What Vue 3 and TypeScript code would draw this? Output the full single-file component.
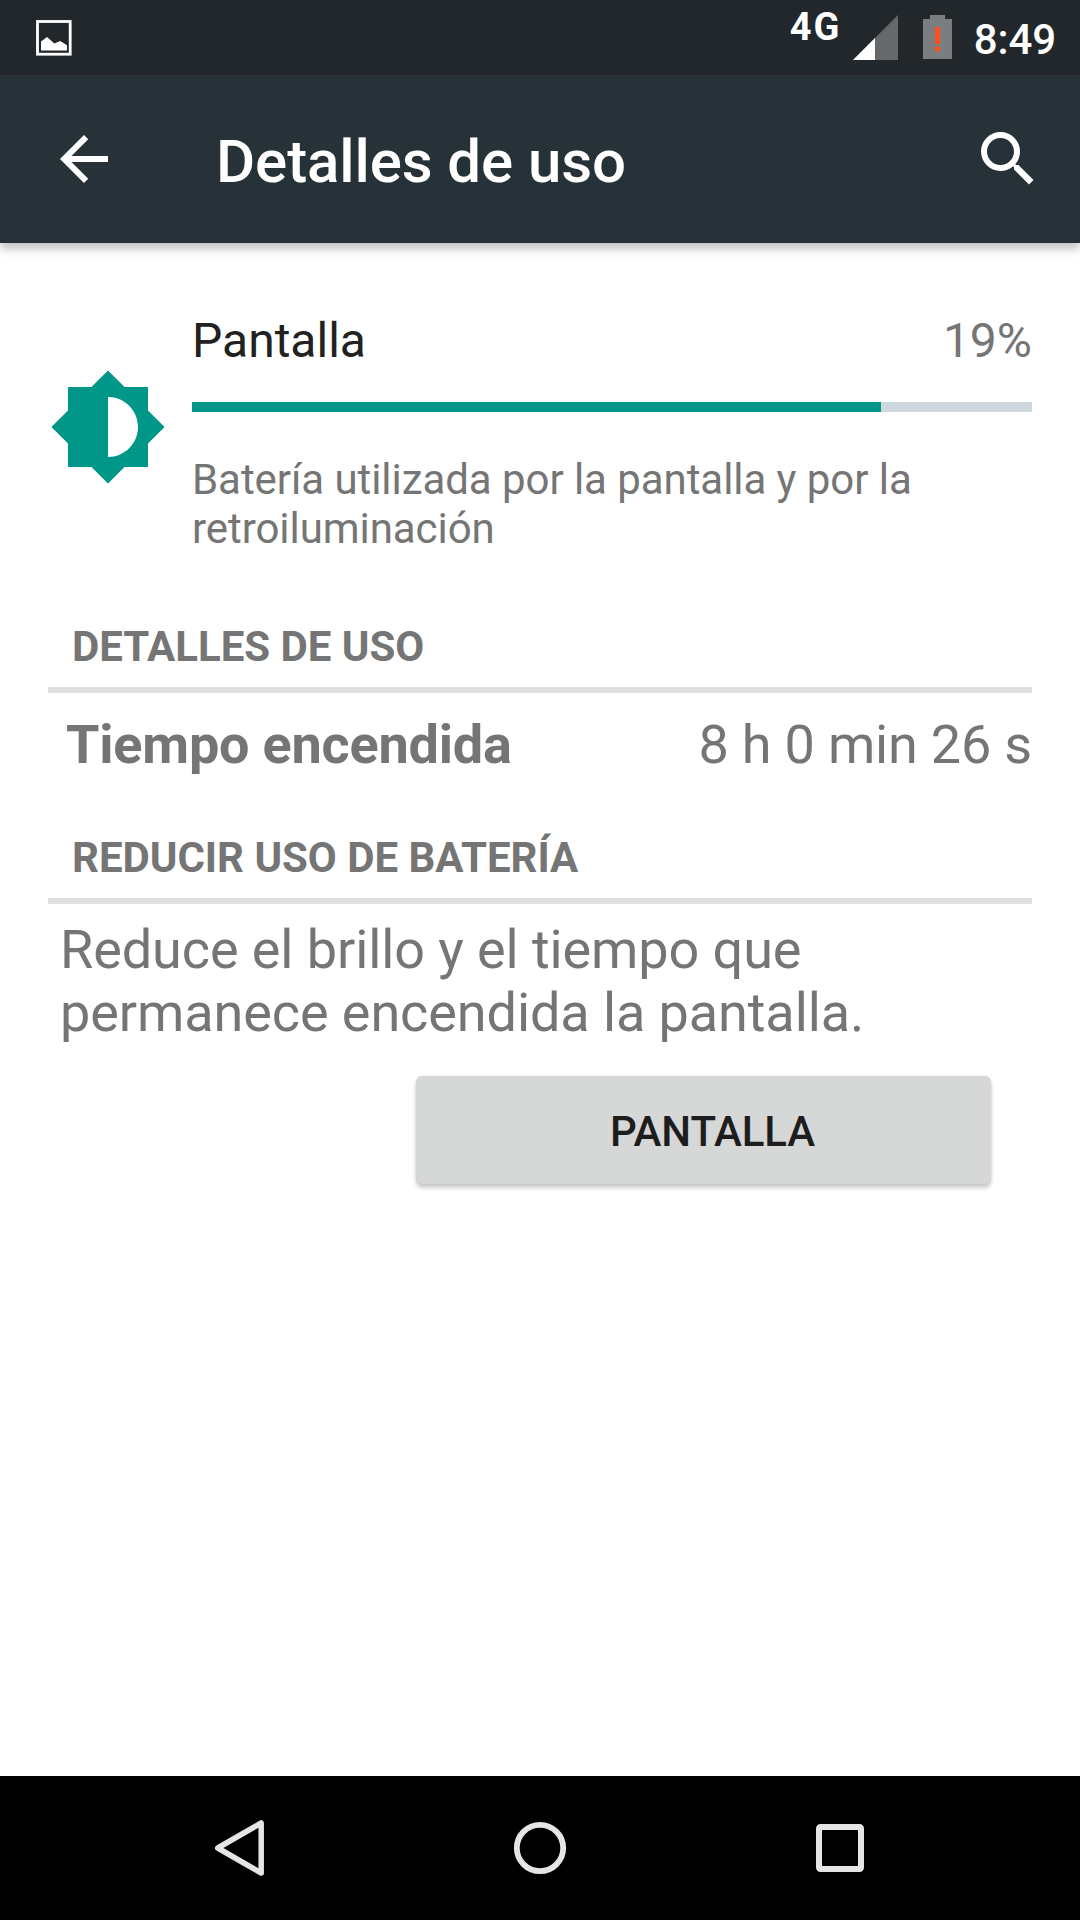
<script setup lang="ts">
import { ref } from 'vue'

interface Usage {
  name: string
  percent: string
  fill: number
  description: string
}

const clock = ref('8:49')
const usage = ref<Usage>({
  name: 'Pantalla',
  percent: '19%',
  fill: 82.02,
  description: 'Batería utilizada por la pantalla y por la retroiluminación',
})
</script>

<template>
  <div class="screen">
    <div class="status-bar">
      <svg class="picture" width="36" height="36" viewBox="0 0 36 36">
        <rect x="1.5" y="1.5" width="32.7" height="32.7" fill="none" stroke="#fff" stroke-width="2.8" />
        <path d="M5 21.5 11 17l7.3 6.6L24.2 21 31 25.2V30.5H5z" fill="#fff" />
      </svg>
      <div class="status-right">
        <span class="network">4G</span>
        <svg class="signal" width="45" height="45" viewBox="0 0 45 45">
          <path d="M0 45 45 0V45z" fill="#66696c" />
          <path d="M0 45 22 23V45z" fill="#fff" />
        </svg>
        <svg class="battery" width="29" height="44" viewBox="0 0 29 44">
          <path d="M7 0H22V4H29V44H0V4H7z" fill="#7a7e80" />
          <path d="M12 12H17V29H12z" fill="#ff5020" />
          <circle cx="14.5" cy="34" r="2.8" fill="#ff5020" />
        </svg>
        <span class="clock">{{ clock }}</span>
      </div>
    </div>

    <header class="app-bar">
      <svg class="back" width="72" height="72" viewBox="0 0 24 24">
        <path fill="#fff" d="M20 11H7.83l5.59-5.59L12 4l-8 8 8 8 1.41-1.41L7.83 13H20v-2z" />
      </svg>
      <h1>Detalles de uso</h1>
      <svg class="search" width="72" height="72" viewBox="0 0 24 24">
        <path
          fill="#fff"
          d="M15.5 14h-.79l-.28-.27A6.471 6.471 0 0 0 16 9.5 6.5 6.5 0 1 0 9.5 16c1.61 0 3.09-.59 4.23-1.57l.27.28v.79l5 4.99L20.49 19l-4.99-5zm-6 0C7.01 14 5 11.99 5 9.5S7.01 5 9.5 5 14 7.01 14 9.5 11.99 14 9.5 14z"
        />
      </svg>
    </header>

    <main>
      <section class="summary">
        <svg class="brightness" width="120" height="120" viewBox="0 0 24 24">
          <path
            fill="#009688"
            d="M20 15.31L23.31 12 20 8.69V4h-4.69L12 .69 8.69 4H4v4.69L.69 12 4 15.31V20h4.69L12 23.31 15.31 20H20v-4.69zM12 18V6c3.31 0 6 2.69 6 6s-2.69 6-6 6z"
          />
        </svg>
        <div class="summary-body">
          <div class="summary-title">
            <span>{{ usage.name }}</span>
            <span class="percent">{{ usage.percent }}</span>
          </div>
          <div class="track"><div class="fill" :style="{ width: usage.fill + '%' }"></div></div>
          <p class="description">{{ usage.description }}</p>
        </div>
      </section>

      <h2>DETALLES DE USO</h2>
      <div class="detail">
        <strong>Tiempo encendida</strong>
        <span>8 h 0 min 26 s</span>
      </div>

      <h2>REDUCIR USO DE BATERÍA</h2>
      <p class="tip">Reduce el brillo y el tiempo que<br />permanece encendida la pantalla.</p>
      <button type="button">PANTALLA</button>
    </main>

    <nav class="nav-bar">
      <svg width="60" height="60" viewBox="0 0 60 60">
        <path d="M51.2 5V55L7.7 30z" fill="none" stroke="#e5e5e5" stroke-width="5.5" stroke-linejoin="round" />
      </svg>
      <svg width="60" height="60" viewBox="0 0 60 60">
        <circle cx="30" cy="30" r="23.2" fill="none" stroke="#e5e5e5" stroke-width="5.8" />
      </svg>
      <svg width="60" height="60" viewBox="0 0 60 60">
        <rect x="9" y="9" width="42" height="42" rx="1.5" fill="none" stroke="#e5e5e5" stroke-width="6" />
      </svg>
    </nav>
  </div>
</template>

<style>
body {
  background: #fff;
}
</style>

<style scoped>
.screen {
  display: flex;
  flex-direction: column;
  width: 1080px;
  height: 1920px;
  overflow: hidden;
  background: #fff;
  color: #757575;
  font-family: Roboto, 'Liberation Sans', sans-serif;
}

h1,
h2,
p {
  margin: 0;
}

svg {
  display: block;
  flex: none;
}

.status-bar {
  display: flex;
  justify-content: space-between;
  height: 75px;
  padding: 0 24px 0 36px;
  box-sizing: border-box;
  background: #22272b;
  color: #fff;
}

.picture {
  margin-top: 20px;
}

.status-right {
  display: flex;
  align-items: flex-start;
}

.network {
  width: 63px;
  margin-top: 5px;
  font-size: 38px;
  font-weight: 700;
  line-height: 45px;
  letter-spacing: 2px;
}

.signal {
  margin-top: 15px;
}

.battery {
  margin: 15px 0 0 25px;
}

.clock {
  margin: 15px 0 0 22px;
  font-size: 42px;
  font-weight: 500;
  line-height: 49px;
  letter-spacing: -0.1px;
}

.app-bar {
  position: relative;
  display: flex;
  align-items: flex-start;
  height: 168px;
  padding: 48px 36px 0 48px;
  box-sizing: border-box;
  background: #263238;
  box-shadow: 0 6px 9px rgba(0, 0, 0, 0.24);
  color: #fff;
}

h1 {
  flex: 1;
  margin: 3px 0 0 96px;
  font-size: 60px;
  font-weight: 500;
  line-height: 71px;
  letter-spacing: -0.09px;
}

main {
  display: flex;
  flex: 1;
  flex-direction: column;
  padding: 69px 48px 0;
}

.summary {
  display: flex;
  align-items: center;
  height: 241px;
  gap: 24px;
}

.brightness {
  margin-top: -11px;
}

.summary-body {
  flex: 1;
  height: 241px;
}

.summary-title {
  display: flex;
  justify-content: space-between;
  height: 57px;
  color: #212121;
  font-size: 48px;
  line-height: 57px;
}

.percent {
  color: #757575;
}

.track {
  height: 10px;
  margin: 33px 0 43px;
  background: #cfd8dc;
}

.fill {
  height: 100%;
  background: #009688;
}

.description {
  font-size: 42px;
  line-height: 49px;
  letter-spacing: -0.06px;
}

h2 {
  height: 65px;
  margin-top: 69px;
  padding-left: 24px;
  border-bottom: 6px solid #dfdfdf;
  font-size: 42px;
  font-weight: 700;
  line-height: 49px;
  letter-spacing: -0.03px;
}

.detail {
  display: flex;
  justify-content: space-between;
  margin-top: 20px;
  padding-left: 18px;
  font-size: 54px;
  line-height: 63px;
  letter-spacing: -0.2px;
}

.detail + h2 {
  margin-top: 57px;
}

.tip {
  margin-top: 14px;
  padding-left: 12px;
  font-size: 54px;
  line-height: 63px;
  letter-spacing: -0.09px;
}

button {
  align-self: flex-end;
  width: 575px;
  height: 108px;
  margin: 32px 41px 0 0;
  padding: 2px 0 0 18px;
  border: 0;
  border-radius: 6px;
  background: #d6d7d7;
  box-shadow: 0 4px 4px rgba(0, 0, 0, 0.2), 0 0 2px rgba(0, 0, 0, 0.12);
  color: #1d1d1d;
  font: 500 42px / 49px Roboto, 'Liberation Sans', sans-serif;
  letter-spacing: -0.1px;
}

.nav-bar {
  display: flex;
  align-items: center;
  justify-content: center;
  gap: 240px;
  height: 144px;
  background: #000;
}
</style>
